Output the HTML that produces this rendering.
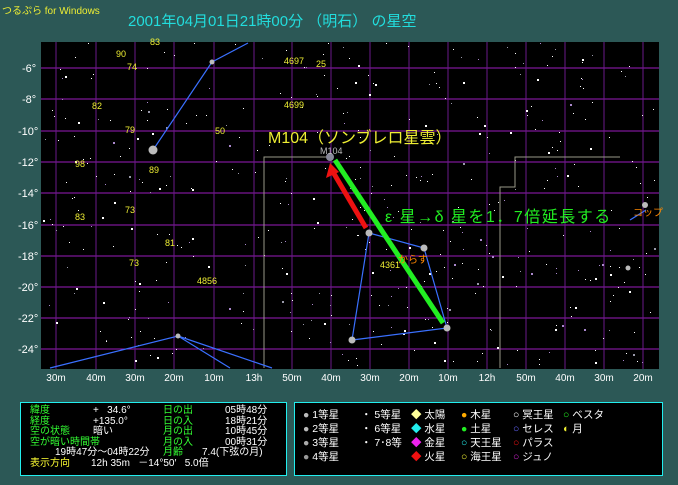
<!DOCTYPE html>
<html><head><meta charset="utf-8"><style>
body{margin:0;width:678px;height:485px;background:#2c5856;overflow:hidden;font-family:"Liberation Sans","Noto Sans CJK JP",sans-serif;position:relative}
.t{position:absolute;white-space:nowrap}
.panel{position:absolute;background:#000;border:1px solid #2ee;box-sizing:border-box}
.g{color:#3f3}.w{color:#fff}.y{color:#ff3}
</style></head><body>
<div class="t" style="left:2px;top:2px;font-size:10px;color:#ee3">つるぷら for Windows</div>
<div class="t" style="left:128px;top:10px;font-size:15px;color:#2dd">2001年04月01日21時00分 （明石） の星空</div>
<svg width="678" height="485" style="position:absolute;left:0;top:0" id="s">
<rect x="41" y="42" width="618" height="327" fill="#000"/>
<g id="grid" stroke-width="1"></g>
<g fill="#fff" font-size="11" font-family="Liberation Sans">
<text x="22" y="72">-6°</text><text x="22" y="103">-8°</text><text x="18" y="135">-10°</text><text x="18" y="166">-12°</text><text x="18" y="197">-14°</text><text x="18" y="229">-16°</text><text x="18" y="260">-18°</text><text x="18" y="291">-20°</text><text x="18" y="322">-22°</text><text x="18" y="353">-24°</text>
</g>
<g fill="#fff" font-size="10" text-anchor="middle" id="xl"></g>
<g id="stars"></g>
<path d="M264,368 V188 M264,188 V157 H330 M500,368 V187 H515 V157 H620" stroke="#998" fill="none"/>
<g stroke="#3a70ff" stroke-width="1.2" fill="none">
<path d="M153,150 L212,62 L248,43"/>
<path d="M369,233 L424,248 L447,328 L352,340 Z"/>
<path d="M50,368 L178,336 L230,368 M178,336 L272,368"/>
<path d="M630,220 L646,210"/>
</g>
<line x1="335" y1="160" x2="443" y2="323" stroke="#2e2" stroke-width="5"/>
<line x1="366" y1="228" x2="333" y2="172" stroke="#e11" stroke-width="5"/>
<polygon points="330,163 326,178 339,172" fill="#e11"/>
<g fill="#bbb"><circle cx="153" cy="150" r="4.5"/><circle cx="330" cy="157" r="4" fill="#889"/><circle cx="369" cy="233" r="3.5"/><circle cx="424" cy="248" r="3.5"/><circle cx="447" cy="328" r="3.5"/><circle cx="352" cy="340" r="3.5"/><circle cx="212" cy="62" r="2.5"/><circle cx="178" cy="336" r="2.5"/><circle cx="645" cy="205" r="3"/><circle cx="628" cy="268" r="2.5"/></g>
<text x="268" y="143" font-size="16" fill="#ee3">M104（ソンブレロ星雲）</text>
<text x="320" y="154" font-size="9" fill="#bbb">M104</text>
<text x="385" y="222" font-size="16" letter-spacing="1.5" fill="#2e2">ε 星→δ 星を1．7倍延長する</text>
<text x="398" y="263" font-size="10" fill="#f80">からす</text>
<text x="633" y="216" font-size="10" fill="#f80">コップ</text>
<g fill="#ee3" font-size="9"><text x="116" y="57">90</text><text x="92" y="109">82</text><text x="125" y="133">79</text><text x="75" y="167">98</text><text x="149" y="173">89</text><text x="215" y="134">50</text><text x="127" y="70">74</text><text x="316" y="67">25</text><text x="284" y="64">4697</text><text x="284" y="108">4699</text><text x="150" y="45">83</text><text x="75" y="220">83</text><text x="125" y="213">73</text><text x="165" y="246">81</text><text x="197" y="284">4856</text><text x="129" y="266">73</text><text x="380" y="268">4361</text></g>
</svg>
<div class="panel" style="left:20px;top:402px;width:267px;height:74px;font-size:10px;line-height:10.5px;padding:2px 0 0 9px">
<div class="t g" style="left:9px;top:3px">緯度<br>経度<br>空の状態<br>空が暗い時間帯</div>
<div class="t w" style="left:72px;top:3px">+&nbsp;&nbsp; 34.6°<br>+135.0°<br>暗い</div>
<div class="t g" style="left:142px;top:3px">日の出<br>日の入<br>月の出<br>月の入</div>
<div class="t w" style="left:204px;top:3px">05時48分<br>18時21分<br>10時45分<br>00時31分</div>
<div class="t w" style="left:34px;top:45px">19時47分～04時22分</div>
<div class="t g" style="left:142px;top:45px">月齢</div>
<div class="t w" style="left:181px;top:45px">7.4(下弦の月)</div>
<div class="t y" style="left:9px;top:56px">表示方向</div>
<div class="t w" style="left:70px;top:56px">12h 35m &nbsp; －14°50′ &nbsp; 5.0倍</div>
</div>
<div class="panel" style="left:294px;top:402px;width:369px;height:74px;font-size:10.5px;color:#fff;line-height:14px">
<div class="t" style="left:8px;top:5px"><span style="color:#bbb">●</span> 1等星<br><span style="color:#bbb">●</span> 2等星<br><span style="color:#aaa">●</span> 3等星<br><span style="color:#999">●</span> 4等星</div>
<div class="t" style="left:66px;top:5px">・ 5等星<br>・ 6等星<br>・ 7･8等</div>
<div class="t" style="left:116px;top:5px"><span style="color:#ff9">◆</span> 太陽<br><span style="color:#2ee">◆</span> 水星<br><span style="color:#e2e">◆</span> 金星<br><span style="color:#e11">◆</span> 火星</div>
<div class="t" style="left:166px;top:5px"><span style="color:#fa0">●</span> 木星<br><span style="color:#2e2">●</span> 土星<br><span style="color:#2ee">○</span> 天王星<br><span style="color:#ee3">○</span> 海王星</div>
<div class="t" style="left:218px;top:5px">○ 冥王星<br><span style="color:#66f">○</span> セレス<br><span style="color:#e11">○</span> パラス<br><span style="color:#c2c">○</span> ジュノ</div>
<div class="t" style="left:268px;top:5px"><span style="color:#2e2">○</span> ベスタ<br><span style="color:#ee3">◐</span> 月</div>
</div>
<script>
var s=document.getElementById('s'),ns='http://www.w3.org/2000/svg';
var g=document.getElementById('grid');
function L(a,b,c,d,col){var l=document.createElementNS(ns,'line');l.setAttribute('x1',a);l.setAttribute('y1',b);l.setAttribute('x2',c);l.setAttribute('y2',d);l.setAttribute('stroke',col);g.appendChild(l);}
[68,99,131,162,193,225,256,287,318,349].forEach(function(y){L(41,y,659,y,'#9a1cbc')});
var xs=[56,96,135,174,214,254,292,331,370,409,448,487,526,565,604,643],lb=['30m','40m','30m','20m','10m','13h','50m','40m','30m','20m','10m','12h','50m','40m','30m','20m'];
var xl=document.getElementById('xl');
xs.forEach(function(x,i){L(x,42,x,369,'#6a1a8a');var t=document.createElementNS(ns,'text');t.setAttribute('x',x);t.setAttribute('y',381);t.textContent=lb[i];xl.appendChild(t);});
var st=document.getElementById('stars'),seed=7;function r(){seed=(seed*16807)%2147483647;return seed/2147483647;}
for(var i=0;i<420;i++){var c=document.createElementNS(ns,'rect');var z=r()<0.85?1:2;c.setAttribute('x',42+r()*616|0);c.setAttribute('y',43+r()*325|0);c.setAttribute('width',z);c.setAttribute('height',z);c.setAttribute('fill',r()<0.7?'#fff':(r()<0.5?'#a8c':'#99a'));st.appendChild(c);}
</script>
</body></html>
